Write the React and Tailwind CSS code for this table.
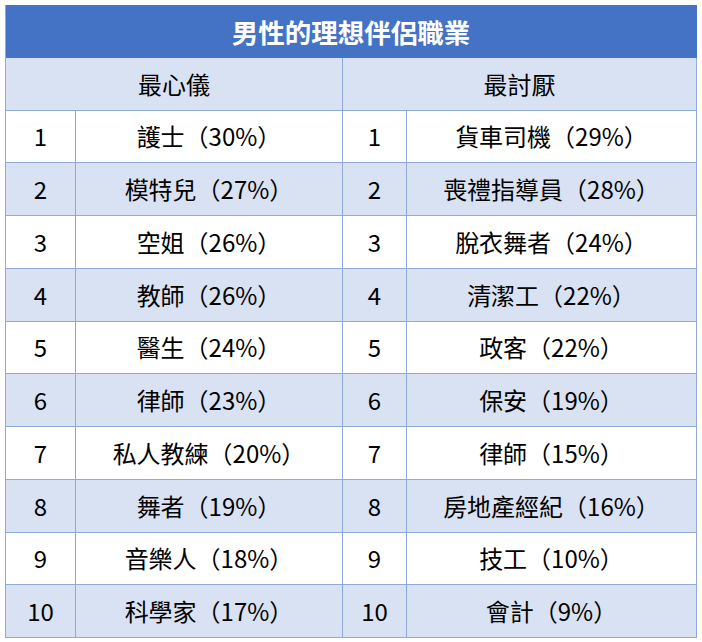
import React from "react";

const rows = [
  ["護士（30%）", "貨車司機（29%）"],
  ["模特兒（27%）", "喪禮指導員（28%）"],
  ["空姐（26%）", "脫衣舞者（24%）"],
  ["教師（26%）", "清潔工（22%）"],
  ["醫生（24%）", "政客（22%）"],
  ["律師（23%）", "保安（19%）"],
  ["私人教練（20%）", "律師（15%）"],
  ["舞者（19%）", "房地產經紀（16%）"],
  ["音樂人（18%）", "技工（10%）"],
  ["科學家（17%）", "會計（9%）"],
];

export default function App() {
  return (
    <div
      className="w-[702px] h-[642px] bg-white pl-[5px] pt-[5px]"
      style={{ fontFamily: '"Noto Sans CJK TC", "Noto Sans", sans-serif' }}
    >
      <div className="grid w-[692px] h-[633px] grid-cols-[70px_267px_64px_1fr] grid-rows-[repeat(12,1fr)] border-l border-[#8EAADB] text-[24px] font-normal text-black">
        <div className="col-span-4 bg-[#4472C4] flex items-center justify-center text-white font-bold text-[26.5px] border-r border-[#4472C4]">
          男性的理想伴侶職業
        </div>
        <div className="col-span-2 bg-[#D9E2F3] flex items-center justify-center border-r border-b border-[#8EAADB]">
          最心儀
        </div>
        <div className="col-span-2 bg-[#D9E2F3] flex items-center justify-center border-r border-b border-[#8EAADB]">
          最討厭
        </div>
        {rows.map(([like, dislike], i) => {
          const bg = i % 2 === 0 ? "bg-white" : "bg-[#D9E2F3]";
          const cell = `${bg} flex items-center justify-center border-r border-b border-[#8EAADB]`;
          return (
            <React.Fragment key={i}>
              <div className={cell}>{i + 1}</div>
              <div className={cell}>{like}</div>
              <div className={cell}>{i + 1}</div>
              <div className={cell}>{dislike}</div>
            </React.Fragment>
          );
        })}
      </div>
    </div>
  );
}
